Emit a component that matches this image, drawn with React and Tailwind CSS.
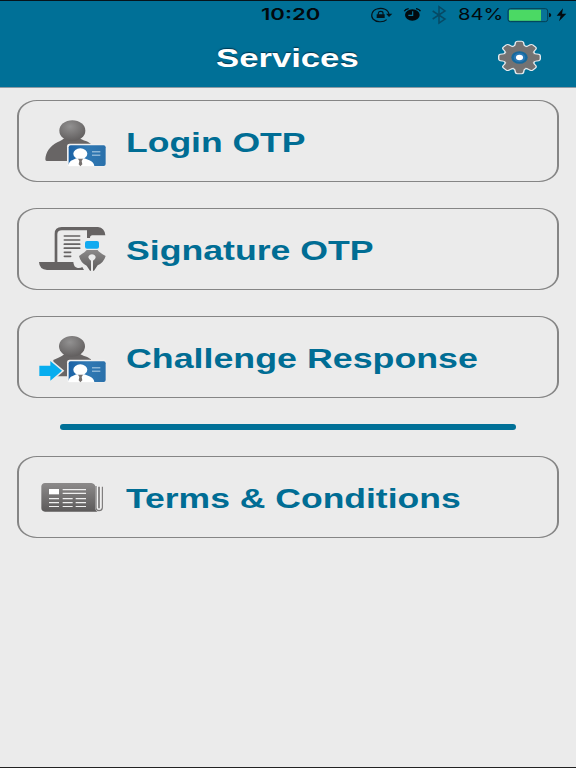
import React from "react";

function Defs() {
  return (
    <svg width="0" height="0" className="absolute" aria-hidden="true">
      <defs>
        <linearGradient id="metal" x1="0" y1="0" x2="0" y2="1">
          <stop offset="0" stopColor="#8c8a8a" />
          <stop offset="1" stopColor="#5c5a5a" />
        </linearGradient>
        <radialGradient id="head" cx="0.42" cy="0.3" r="0.7">
          <stop offset="0" stopColor="#929191" />
          <stop offset="1" stopColor="#625f5f" />
        </radialGradient>
        <linearGradient id="card" x1="0" y1="0" x2="1" y2="0">
          <stop offset="0" stopColor="#1b62a5" />
          <stop offset="0.5" stopColor="#3079b4" />
          <stop offset="1" stopColor="#2a70aa" />
        </linearGradient>
      </defs>
    </svg>
  );
}

function Badge() {
  return (
    <g>
      <rect x="171" y="146" width="118" height="69" rx="8" fill="#f0f0f0" />
      <rect x="176" y="151" width="111" height="62" rx="6" fill="url(#card)" />
      <path d="M175 213 Q176 199 188 195 L199 190 H223 L238 196 Q251 201 253 213 Z" fill="#fff" />
      <ellipse cx="211" cy="176" rx="21" ry="16" fill="#fff" />
      <path d="M204 191 H219 L215 198 L217 208 L211 214 L206 208 L208 198 Z" fill="#77716f" />
      <path d="M246 170.500 H271 M246 180.500 H271" stroke="#b9d5e9" strokeWidth="3" />
    </g>
  );
}

function Person() {
  return (
    <g>
      <path d="M106 193 C107 172 120 153 142 142 C152 137 158 135 163 130 V124 H210 V130 C216 136 233 138 243 147 L243 198 H110 Q106 198 106 193 Z" fill="#686565" />
      <ellipse cx="187" cy="107" rx="39" ry="31" fill="url(#head)" />
    </g>
  );
}

function LoginIcon() {
  return (
    <svg viewBox="84 69 210 150" className="h-[50px] w-[70px] shrink-0">
      <Person />
      <Badge />
    </svg>
  );
}

function ChallengeIcon() {
  return (
    <svg viewBox="84 69 210 150" className="h-[50px] w-[70px] shrink-0">
      <g transform="translate(0 -2)">
        <path d="M130 149 C144 142 158 138 163 130 V124 H210 V130 C216 136 233 138 243 147 V198 H130 Z" fill="#686565" />
        <ellipse cx="186" cy="108" rx="39" ry="31" fill="url(#head)" />
      </g>
      <path
        d="M88 164 H121 V150 L156 179.500 L121 209 V195 H88 Z"
        fill="#ebebeb"
        stroke="#ebebeb"
        strokeWidth="9"
      />
      <path d="M88 164 H121 V150 L156 179.500 L121 209 V195 H88 Z" fill="#06adef" />
      <Badge />
    </svg>
  );
}

function SignatureIcon() {
  return (
    <svg viewBox="84 69 210 150" className="h-[50px] w-[70px] shrink-0">
      <path
        d="M87 177 H134 V92 Q134 72 155 72 H264 Q284 74 286 97 H247 Q240 97 240 105 H231 V82 H156 Q142 82 142 94 V177 H190 Q191 193 203 195 Q212 196 217 192 L222 201 H111 Q88 199 87 177 Z"
        fill="#666363"
      />
      <path
        d="M163 99 H209 M163 111 H209 M163 123.500 H209 M163 135.500 H209 M163 148 H182 M163 160 H182"
        stroke="#666363"
        strokeWidth="5"
        strokeLinecap="round"
      />
      <rect x="225" y="114" width="42" height="23" rx="6" fill="#12aaf0" />
      <path
        d="M207 159 Q228 145 230 141 H263 Q266 147 287 159 Q281 179 263 187 L252 203 H249 V173 Q257 169 257 163 Q256 155 246 154 Q236 155 235 163 Q236 169 243 173 V203 H240 L230 188 Q212 180 207 159 Z"
        fill="url(#metal)"
      />
      <path d="M243 172 H249 V204 H243 Z" fill="#ebebeb" />
    </svg>
  );
}

function TermsIcon() {
  return (
    <svg viewBox="84 72 210 150" className="h-[50px] w-[70px] shrink-0">
      <path
        d="M105 99 H244 Q255 101 256 110 V176 Q257 183 263 185 H105 Q94 184 94 174 V109 Q95 100 105 99 Z"
        fill="url(#metal)"
      />
      <path d="M258 108 V173 Q258 182 267 182 Q277 182 277 172 V110" fill="none" stroke="#777575" strokeWidth="3.500" />
      <path d="M267 110 V175" stroke="#777575" strokeWidth="5" />
      <path d="M262.500 108 V176 M272.500 108 V174" stroke="#f4f4f4" strokeWidth="2.500" />
      <rect x="117" y="117" width="30" height="16" fill="#fff" />
      <path
        d="M158 119 H228 M158 130 H228 M117 146 H147 M158 146 H188 M197 146 H228 M117 158 H147 M158 158 H188 M197 158 H228 M117 169.500 H147 M158 169.500 H188 M197 169.500 H228"
        stroke="#efefef"
        strokeWidth="3.500"
      />
    </svg>
  );
}

function GearIcon() {
  const teeth = [0, 45, 90, 135, 180, 225, 270, 315];
  const tooth = "M-8.500 -20 Q-5.500 -22 -5.500 -25 L-5 -28 Q-4.500 -29.500 -3 -29.500 H3 Q4.500 -29.500 5 -28 L5.500 -25 Q5.500 -22 8.500 -20 Z";
  return (
    <svg viewBox="-33 -33 66 66" preserveAspectRatio="none" className="h-[35px] w-[45px]">
      <g fill="#e9edf0" stroke="#e9edf0" strokeWidth="4" strokeLinejoin="round">
        <circle r="21.500" />
        {teeth.map((a) => (
          <path key={a} d={tooth} transform={`rotate(${a})`} />
        ))}
      </g>
      <g fill="#747272">
        <circle r="21.500" />
        {teeth.map((a) => (
          <path key={a} d={tooth} transform={`rotate(${a})`} />
        ))}
      </g>
      <circle r="12" fill="#17699c" />
      <circle r="8.500" fill="#2a78b5" />
      <circle r="5.200" fill="#fff" />
    </svg>
  );
}

function StatusIcons() {
  return (
    <svg viewBox="30 0 230 90" className="h-[30px] w-[76.700px]">
      <g fill="none" stroke="#04141b" strokeWidth="3.500">
        <path d="M80 59 C70 68 48 67 39 57 C31 48 36 31 50 27 C68 21 86 29 87 44" />
      </g>
      <path d="M78 41 H97 L87 51 Z M50 43 H74 V54 H50 Z" fill="#04141b" />
      <path d="M55 44 V39 Q56 34 62 34 Q69 34 69 39 V44" fill="none" stroke="#04141b" strokeWidth="3.500" />
      <ellipse cx="157" cy="45" rx="22" ry="17" fill="#020a0e" />
      <path d="M133 34 Q136 27 146 26 M168 26 Q179 28 181 34" fill="none" stroke="#020a0e" strokeWidth="4" />
      <path d="M158 34 V46 H145" fill="none" stroke="#08749a" strokeWidth="3.500" />
      <path d="M218 33 L255 57 L237 69 V20 L255 33 L218 57" fill="none" stroke="#064a65" strokeWidth="4.500" />
    </svg>
  );
}

function BatteryIcon() {
  return (
    <svg viewBox="441 0 183 90" className="h-[30px] w-[61px]">
      <rect x="444" y="26" width="119" height="39" rx="7" fill="#087397" stroke="#043f54" strokeWidth="3" />
      <path d="M450 29 H543 V62 H450 Q447 62 447 58 V33 Q447 29 450 29 Z" fill="#4bd964" />
      <path d="M567 38 Q574 40 574 45 Q574 50 567 52 Z" fill="#04141b" />
      <path d="M609 25 L590 47 H602 L597 64 L619 41 H606 Z" fill="#020a0e" />
    </svg>
  );
}

function ServiceButton({ icon, label, stretch }) {
  return (
    <button
      type="button"
      className="flex h-[82px] w-full items-center rounded-[20px/16px] border-x-2 border-y border-[#858585] bg-[#ebebeb] pl-[19px] text-left"
    >
      <span className="mt-[4px] flex">{icon}</span>
      <span
        className={`mt-[3px] ml-[18px] inline-block origin-left whitespace-nowrap text-[27px] leading-[32px] font-bold text-[#006d94] ${stretch}`}
      >
        {label}
      </span>
    </button>
  );
}

export default function App() {
  return (
    <div className="flex h-[768px] w-[576px] flex-col overflow-hidden border-y border-t-[#06141c] border-b-[#222] bg-[#ebebeb] font-['Liberation_Sans',Arial,sans-serif]">
      <Defs />
      <header className="h-[87px] shrink-0 border-b border-[#8d9ba5] bg-[#007097]">
        <div className="grid h-[27px] grid-cols-[261px_109px_1fr] items-center font-['Inter',sans-serif] text-[16px] leading-[27px] text-[#02090d]">
          <span />
          <span className="inline-block origin-left scale-x-[1.38] justify-self-start font-semibold">10:20</span>
          <div className="flex h-[27px] items-center">
            <StatusIcons />
            <span className="ml-[11px] w-[49px]">
              <span className="inline-block origin-left scale-x-[1.26]">84%</span>
            </span>
            <BatteryIcon />
          </div>
        </div>
        <div className="grid h-[58px] grid-cols-[1fr_144px_1fr] items-center">
          <span />
          <h1 className="mt-[1px] origin-left scale-x-[1.36] justify-self-start text-[25.500px] leading-[30px] font-bold text-white [text-shadow:0_-1px_1px_rgba(0,30,50,0.700)]">
            Services
          </h1>
          <button type="button" aria-label="Settings" className="mr-[34px] justify-self-end">
            <GearIcon />
          </button>
        </div>
      </header>
      <main className="flex flex-col pt-[12px] pr-[17px] pl-[17px]">
        <div className="flex flex-col gap-[26px]">
          <ServiceButton icon={<LoginIcon />} label="Login OTP" stretch="scale-x-[1.315]" />
          <ServiceButton icon={<SignatureIcon />} label="Signature OTP" stretch="scale-x-[1.32]" />
          <ServiceButton icon={<ChallengeIcon />} label="Challenge Response" stretch="scale-x-[1.325]" />
        </div>
        <div className="mt-[26px] mb-[26px] ml-[43px] h-[6px] w-[456px] rounded-full bg-[#007097]" />
        <ServiceButton icon={<TermsIcon />} label="Terms &amp; Conditions" stretch="scale-x-[1.315]" />
      </main>
    </div>
  );
}
